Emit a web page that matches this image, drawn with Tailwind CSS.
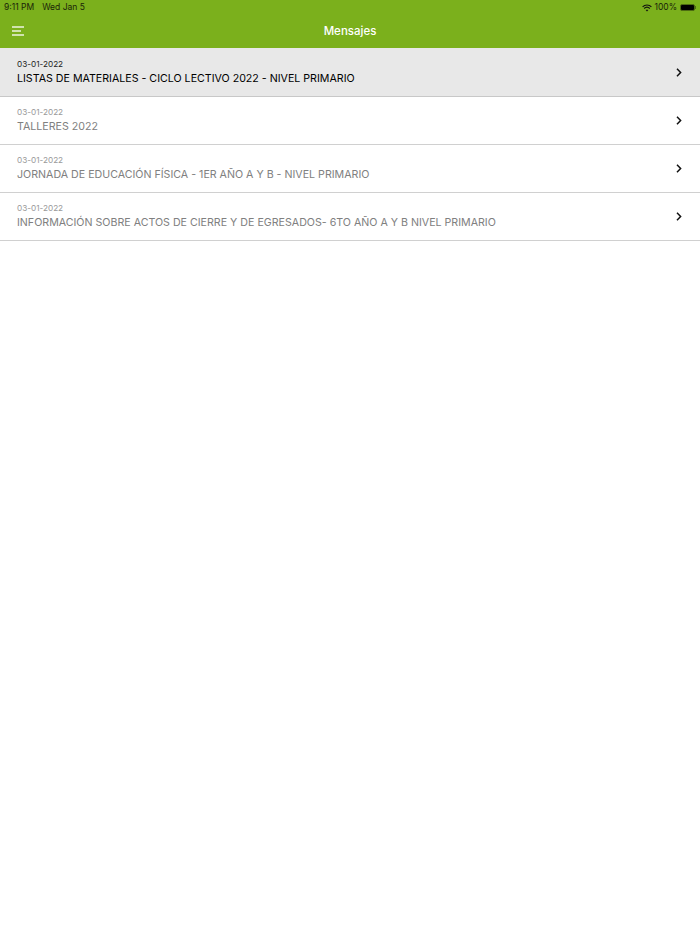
<!DOCTYPE html>
<html lang="en">
<head>
    <meta charset="UTF-8">
    <title>Mensajes</title>
    <script src="https://cdn.jsdelivr.net/npm/@tailwindcss/browser@4"></script>
</head>
<body class="bg-white min-h-screen font-['Inter',sans-serif]">

    <header class="bg-[#7bb01c] h-[48px] flex flex-col">
        <div class="h-[14px] pt-[1px] flex items-center justify-between pl-[4px] pr-[4px] text-[8.5px] leading-none text-[#1a2408]">
            <div class="flex gap-[8px]">
                <span>9:11 PM</span>
                <span>Wed Jan 5</span>
            </div>
            <div class="flex items-center gap-[3px]">
                <svg class="mr-[-1px]" width="10" height="8" viewBox="0 0 10 8" fill="none" stroke="#111" stroke-width="1.2">
                    <path d="M0.6 2.8C3 0.4 7 0.4 9.4 2.8"/>
                    <path d="M2.2 4.5C3.8 3 6.2 3 7.8 4.5"/>
                    <path d="M5 7.6L3.7 6.1C4.5 5.5 5.5 5.5 6.3 6.1Z" fill="#111" stroke="none"/>
                </svg>
                <span>100%</span>
                <div class="flex items-center">
                    <div class="w-[15px] h-[7px] rounded-[2px] border border-[#4d6c12] bg-black"></div>
                    <div class="w-[1px] h-[3px] bg-[#4d6c12]"></div>
                </div>
            </div>
        </div>
        <div class="relative flex-1 flex items-center justify-center pt-[1px]">
            <svg class="absolute left-[12px] top-[12px]" width="12" height="10" viewBox="0 0 12 10" fill="none" stroke="#fff" stroke-width="1.3">
                <path d="M0 1H12"/>
                <path d="M0 5H9"/>
                <path d="M0 9H12"/>
            </svg>
            <h1 class="text-white text-[11.5px] font-medium">Mensajes</h1>
        </div>
    </header>

    <ul>
        <li class="h-[49px] bg-[#e8e8e8] border-b border-[#c8c8c8] flex items-center justify-between pl-[17px] pr-[18px] text-black">
            <div>
                <p class="text-[8.2px] leading-[11px] pb-[1px] text-[#222]">03-01-2022</p>
                <p class="text-[10.65px] leading-[15px]">LISTAS DE MATERIALES - CICLO LECTIVO 2022 - NIVEL PRIMARIO</p>
            </div>
            <svg width="6" height="9" viewBox="0 0 6 9" fill="none" stroke="#111" stroke-width="1.5"><path d="M1 0.8L4.6 4.5L1 8.2"/></svg>
        </li>
        <li class="h-[48px] bg-white border-b border-[#d0d0d0] flex items-center justify-between pl-[17px] pr-[18px] text-[#808080]">
            <div>
                <p class="text-[8.2px] leading-[11px] pb-[1px] text-[#999]">03-01-2022</p>
                <p class="text-[10.65px] leading-[15px]">TALLERES 2022</p>
            </div>
            <svg width="6" height="9" viewBox="0 0 6 9" fill="none" stroke="#111" stroke-width="1.5"><path d="M1 0.8L4.6 4.5L1 8.2"/></svg>
        </li>
        <li class="h-[48px] bg-white border-b border-[#d0d0d0] flex items-center justify-between pl-[17px] pr-[18px] text-[#808080]">
            <div>
                <p class="text-[8.2px] leading-[11px] pb-[1px] text-[#999]">03-01-2022</p>
                <p class="text-[10.65px] leading-[15px]">JORNADA DE EDUCACIÓN FÍSICA - 1ER AÑO A Y B - NIVEL PRIMARIO</p>
            </div>
            <svg width="6" height="9" viewBox="0 0 6 9" fill="none" stroke="#111" stroke-width="1.5"><path d="M1 0.8L4.6 4.5L1 8.2"/></svg>
        </li>
        <li class="h-[48px] bg-white border-b border-[#d0d0d0] flex items-center justify-between pl-[17px] pr-[18px] text-[#808080]">
            <div>
                <p class="text-[8.2px] leading-[11px] pb-[1px] text-[#999]">03-01-2022</p>
                <p class="text-[10.65px] leading-[15px]">INFORMACIÓN SOBRE ACTOS DE CIERRE Y DE EGRESADOS- 6TO AÑO A Y B NIVEL PRIMARIO</p>
            </div>
            <svg width="6" height="9" viewBox="0 0 6 9" fill="none" stroke="#111" stroke-width="1.5"><path d="M1 0.8L4.6 4.5L1 8.2"/></svg>
        </li>
    </ul>

</body>
</html>
